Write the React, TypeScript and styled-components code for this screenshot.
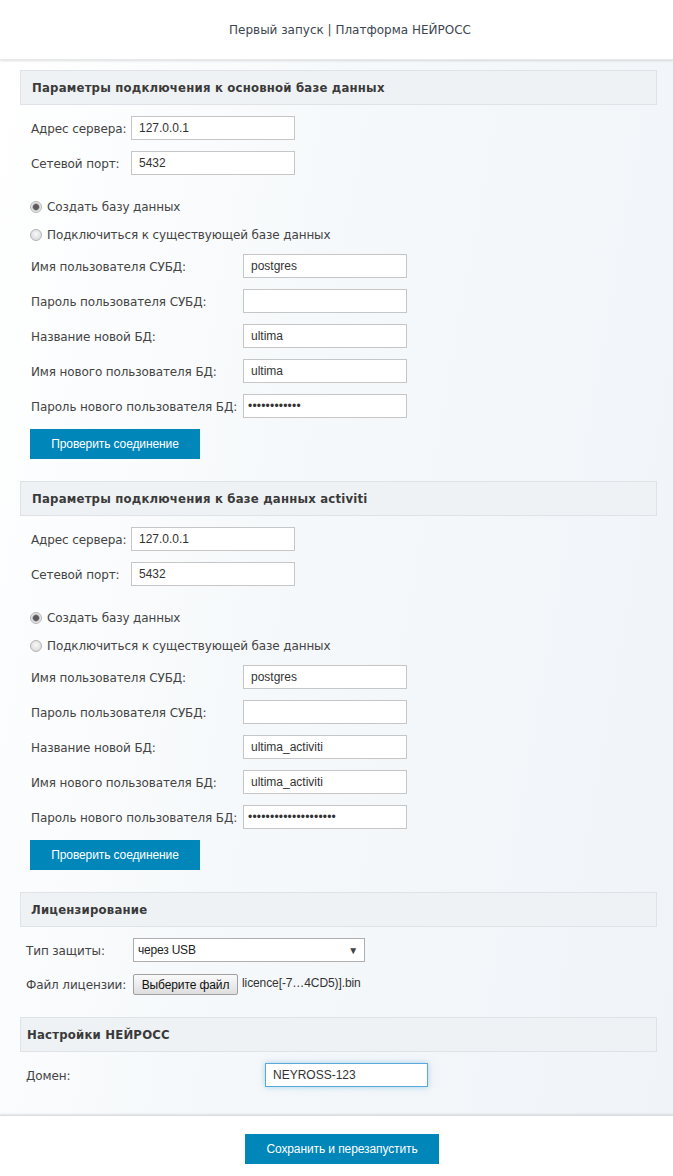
import React from "react";
import styled, { createGlobalStyle } from "styled-components";

const Global = createGlobalStyle`
  html, body { margin: 0; padding: 0; background: #fff; }
  body { font-family: "DejaVu Sans", sans-serif; color: #333; }
  * { box-sizing: border-box; }
`;

const Page = styled.div`
  width: 673px;
  min-height: 1176px;
  display: flex;
  flex-direction: column;
  background: #fff;
`;

const Header = styled.header`
  height: 60px;
  background: #fff;
  display: flex;
  align-items: center;
  justify-content: center;
  padding-left: 27px;
  font-size: 12px;
  color: #3c4650;
  position: relative;
  z-index: 1;
  box-shadow: 0 1px 2px rgba(0, 0, 0, 0.12);
  border-bottom: 1px solid #e6e8ea;
`;

const Main = styled.main`
  background: linear-gradient(100deg, #ffffff 0%, #f6f9fb 40%, #f0f4f8 100%);
  padding: 10px 16px 28px 20px;
`;

const Section = styled.section<{ $gapAfter?: number }>`
  display: flex;
  flex-direction: column;
  margin-bottom: ${(p) => p.$gapAfter ?? 22}px;
`;

const SectionTitle = styled.h2<{ $indent?: number }>`
  margin: 0;
  height: 35px;
  display: flex;
  align-items: center;
  padding-left: ${(p) => p.$indent ?? 11}px;
  background: #eef2f5;
  border: 1px solid #dfe3e7;
  font-family: "DejaVu Sans Condensed", "DejaVu Sans", sans-serif;
  font-weight: bold;
  font-size: 13px;
  letter-spacing: 0.2px;
  color: #3a3a3a;
`;

const Body = styled.div<{ $pad?: number }>`
  display: flex;
  flex-direction: column;
  padding-left: ${(p) => p.$pad ?? 11}px;
  padding-top: 11px;
`;

const Row = styled.div<{ $gap?: number }>`
  display: flex;
  align-items: center;
  height: 24px;
  margin-bottom: ${(p) => p.$gap ?? 11}px;
`;

const Label = styled.label<{ $w: number }>`
  width: ${(p) => p.$w}px;
  flex: none;
  padding-top: 1px;
  font-size: 12px;
  letter-spacing: -0.12px;
  color: #444;
`;

const Input = styled.input<{ $focus?: boolean }>`
  width: 164px;
  height: 24px;
  border: 1px solid ${(p) => (p.$focus ? "#5ba8dc" : "#c6c6c6")};
  background: #fff;
  padding: 0 7px;
  font-family: "Liberation Sans", Arial, sans-serif;
  font-size: 12px;
  color: #333;
  outline: none;
  box-shadow: ${(p) => (p.$focus ? "0 0 6px rgba(91, 168, 220, 0.5)" : "none")};
  &[type="password"] {
    padding-left: 4px;
    letter-spacing: 0.2px;
  }
`;

const RadioRow = styled.label<{ $top: number }>`
  display: flex;
  align-items: center;
  gap: 5px;
  height: 20px;
  margin-top: ${(p) => p.$top}px;
  margin-left: -1px;
  font-size: 12px;
  letter-spacing: -0.12px;
  color: #444;
`;

const RadioDot = styled.span<{ $checked?: boolean }>`
  width: 12px;
  height: 12px;
  border-radius: 50%;
  border: 1px solid #b4b4b4;
  background: ${(p) =>
    p.$checked
      ? "radial-gradient(circle, #5a5a5a 0 2.5px, #8e8e8e 3px, #e2e2e2 4px, #f3f3f3 6px)"
      : "radial-gradient(circle at 50% 40%, #f8f8f8 0, #dcdcdc 6px)"};
  flex: none;
`;

const Spacer = styled.div<{ $h: number }>`
  height: ${(p) => p.$h}px;
`;

const ButtonRow = styled.div<{ $center?: boolean }>`
  display: flex;
  justify-content: ${(p) => (p.$center ? "center" : "flex-start")};
  margin-left: ${(p) => (p.$center ? "0" : "-1px")};
`;

const PrimaryButton = styled.button<{ $w: number }>`
  width: ${(p) => p.$w}px;
  height: 30px;
  border: none;
  background: #0086b9;
  color: #fff;
  font-family: "Liberation Sans", Arial, sans-serif;
  font-size: 12px;
  letter-spacing: -0.1px;
  cursor: pointer;
`;

const Select = styled.div`
  width: 232px;
  height: 24px;
  border: 1px solid #aeaeae;
  background: #fff;
  display: flex;
  align-items: center;
  justify-content: space-between;
  padding: 0 6px 0 4px;
  font-family: "Liberation Sans", Arial, sans-serif;
  font-size: 12px;
  letter-spacing: -0.2px;
  color: #222;
`;

const Arrow = styled.span`
  font-size: 10px;
  color: #444;
`;

const FileButton = styled.button`
  height: 21px;
  width: 105px;
  padding: 0;
  border: 1px solid #a0a0a0;
  border-radius: 2px;
  background: linear-gradient(#fafafa, #dedede);
  font-family: "Liberation Sans", Arial, sans-serif;
  font-size: 12px;
  letter-spacing: -0.1px;
  color: #111;
`;

const FileName = styled.span`
  margin-left: 4px;
  margin-top: -4px;
  font-family: "Liberation Sans", Arial, sans-serif;
  font-size: 12px;
  letter-spacing: -0.1px;
  color: #333;
`;

const Footer = styled.footer`
  flex: 1;
  background: #fff;
  display: flex;
  justify-content: center;
  padding-top: 18px;
  padding-left: 11px;
  box-shadow: 0 -1px 2px rgba(0, 0, 0, 0.1);
  border-top: 1px solid #dadde0;
  position: relative;
`;

type DbProps = { title: string; newDb: string; newUser: string; pwd: string };

function DbSection({ title, newDb, newUser, pwd }: DbProps) {
  return (
    <Section>
      <SectionTitle>{title}</SectionTitle>
      <Body>
        <Row>
          <Label $w={100}>Адрес сервера:</Label>
          <Input defaultValue="127.0.0.1" />
        </Row>
        <Row $gap={0}>
          <Label $w={100}>Сетевой порт:</Label>
          <Input defaultValue="5432" />
        </Row>
        <RadioRow $top={22}>
          <RadioDot $checked />
          Создать базу данных
        </RadioRow>
        <RadioRow $top={8}>
          <RadioDot />
          Подключиться к существующей базе данных
        </RadioRow>
        <Spacer $h={9} />
        <Row>
          <Label $w={212}>Имя пользователя СУБД:</Label>
          <Input defaultValue="postgres" />
        </Row>
        <Row>
          <Label $w={212}>Пароль пользователя СУБД:</Label>
          <Input />
        </Row>
        <Row>
          <Label $w={212}>Название новой БД:</Label>
          <Input defaultValue={newDb} />
        </Row>
        <Row>
          <Label $w={212}>Имя нового пользователя БД:</Label>
          <Input defaultValue={newUser} />
        </Row>
        <Row>
          <Label $w={212}>Пароль нового пользователя БД:</Label>
          <Input type="password" defaultValue={pwd} />
        </Row>
        <ButtonRow>
          <PrimaryButton $w={170}>Проверить соединение</PrimaryButton>
        </ButtonRow>
      </Body>
    </Section>
  );
}

export default function App() {
  return (
    <Page>
      <Global />
      <Header>Первый запуск | Платформа НЕЙРОСС</Header>
      <Main>
        <DbSection
          title="Параметры подключения к основной базе данных"
          newDb="ultima"
          newUser="ultima"
          pwd="ultima123456"
        />
        <DbSection
          title="Параметры подключения к базе данных activiti"
          newDb="ultima_activiti"
          newUser="ultima_activiti"
          pwd="ultima_activiti12345"
        />
        <Section $gapAfter={22}>
          <SectionTitle $indent={10}>Лицензирование</SectionTitle>
          <Body $pad={6}>
            <Row $gap={12}>
              <Label $w={107}>Тип защиты:</Label>
              <Select>
                через USB
                <Arrow>▼</Arrow>
              </Select>
            </Row>
            <Row $gap={0} style={{ height: 21 }}>
              <Label $w={107}>Файл лицензии:</Label>
              <FileButton>Выберите файл</FileButton>
              <FileName>licence[-7…4CD5)].bin</FileName>
            </Row>
          </Body>
        </Section>
        <Section $gapAfter={0}>
          <SectionTitle $indent={6}>Настройки НЕЙРОСС</SectionTitle>
          <Body $pad={6}>
            <Row $gap={0}>
              <Label $w={239}>Домен:</Label>
              <Input $focus defaultValue="NEYROSS-123" style={{ width: 163 }} />
            </Row>
          </Body>
        </Section>
      </Main>
      <Footer>
        <ButtonRow $center>
          <PrimaryButton $w={194}>Сохранить и перезапустить</PrimaryButton>
        </ButtonRow>
      </Footer>
    </Page>
  );
}
